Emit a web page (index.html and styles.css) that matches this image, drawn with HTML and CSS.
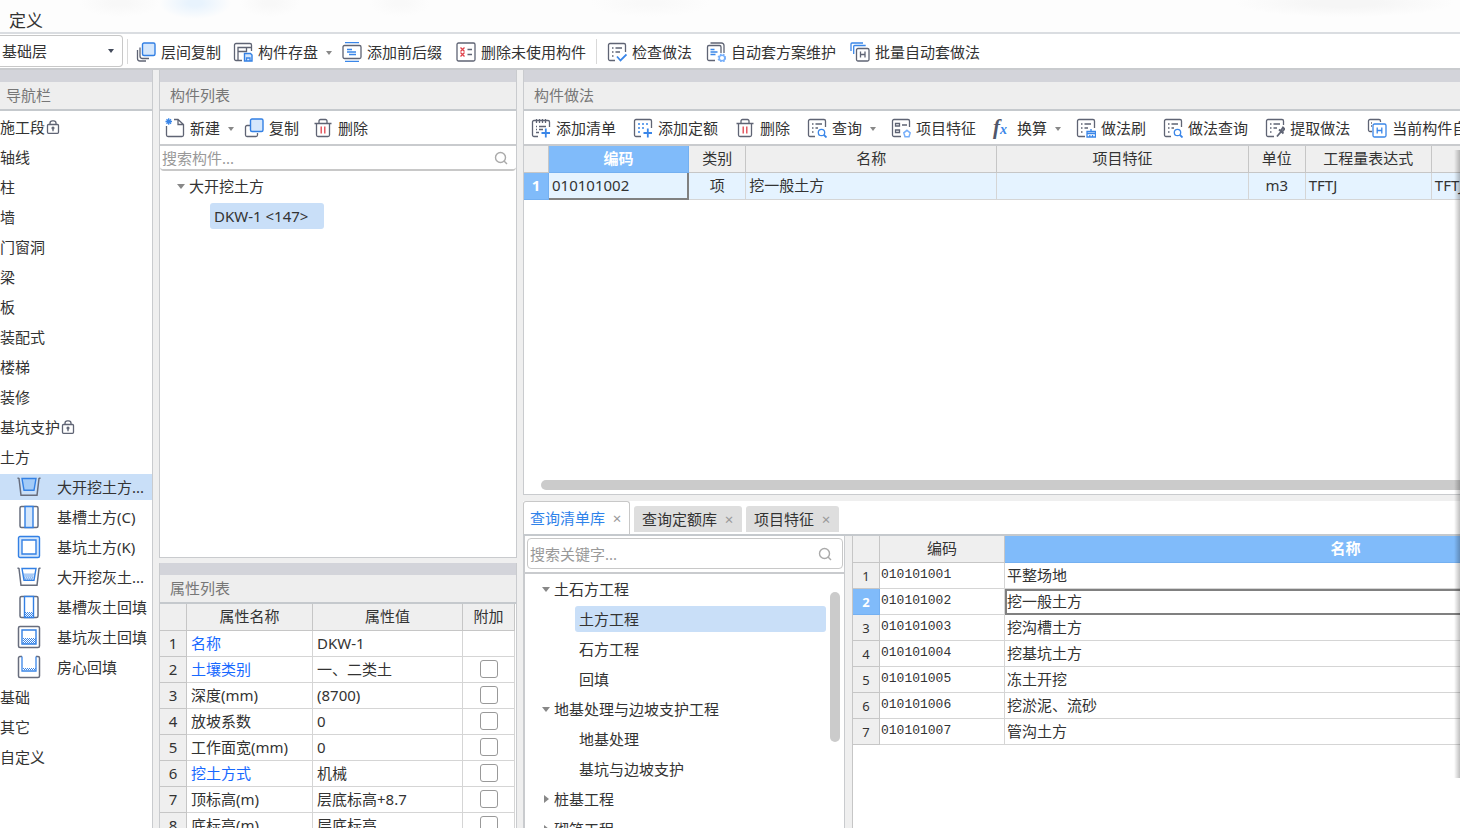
FILE: index.html
```html
<!DOCTYPE html>
<html lang="zh-CN">
<head>
<meta charset="utf-8">
<meta name="viewport" content="width=device-width, initial-scale=1">
<title>定义</title>
<link rel="stylesheet" href="styles.css">
</head>
<body>
<svg class="sprite" aria-hidden="true">
  <symbol id="i-layers" viewBox="0 0 20 20"><path class="g" d="M1.500 8v8.500A2.500 2.500 0 0 0 4 19h6"/><path class="g" d="M4 5.500V14a2.500 2.500 0 0 0 2.500 2.500H13"/><rect class="bf" x="6.500" y="1" width="12.500" height="12.500" rx="1.500"/></symbol>
  <symbol id="i-store" viewBox="0 0 20 20"><path class="g" d="M9 18.500H3A1.500 1.500 0 0 1 1.500 17V3A1.500 1.500 0 0 1 3 1.500h14A1.500 1.500 0 0 1 18.500 3v6M5 18V5.500h13M5 9.500h8.500v-4"/><path class="bf" d="M11.500 11.500h6l1.500 1.500v6h-7.500z"/><path class="b" d="M13.500 19v-3h3.500v3"/></symbol>
  <symbol id="i-affix" viewBox="0 0 20 20"><path class="b" d="M3 .7h14M3 19.300h14M5 7.500h5M5 10h9M7 12.500h7"/><rect class="g" x="1" y="3.500" width="18" height="13" rx="1.500"/></symbol>
  <symbol id="i-unused" viewBox="0 0 20 20"><rect class="g" x="1" y="1" width="18" height="18" rx="1.500"/><path class="g" d="M11.500 7.500h4.500M11.500 12.500h4.500"/><path class="r" d="M4.500 5.500l4 4m0-4l-4 4M4.500 10.500l4 4m0-4l-4 4"/></symbol>
  <symbol id="i-check" viewBox="0 0 20 20"><path class="g" d="M8 18.500H3A1.500 1.500 0 0 1 1.500 17V3A1.500 1.500 0 0 1 3 1.500h14A1.500 1.500 0 0 1 18.500 3v7M5 6h1.500M8.500 6H15M5 10h1.500M8.500 10H13M5 14h1.500"/><path class="b w" d="M10 14.500l3.500 4 6-6"/></symbol>
  <symbol id="i-scheme" viewBox="0 0 20 20"><path class="g" d="M9 18.500H3A1.500 1.500 0 0 1 1.500 17V5A1.500 1.500 0 0 1 3 3.500h10.500A1.500 1.500 0 0 1 15 5v6M4.500 1h11A2.500 2.500 0 0 1 18 3.500V11"/><path class="b" d="M4.500 7.500h4M4.500 10h7M4.500 12.500h5"/><circle class="soft" cx="16" cy="16" r="2.800"/><circle class="soft dash" cx="16" cy="16" r="3.700"/></symbol>
  <symbol id="i-batch" viewBox="0 0 20 20"><path class="b" d="M1 9V2A1 1 0 0 1 2 1h11M3.700 12V4.500a1 1 0 0 1 1-1h11"/><rect class="g" x="6.500" y="6.500" width="12.500" height="12.500" rx="1.500"/><path class="g" d="M10.500 9.500v6m4.500-6v6m-4.500-3H15"/></symbol>
  <symbol id="i-new" viewBox="0 0 20 20"><path class="g" d="M1.500 8v9A1.500 1.500 0 0 0 3 18.500h14a1.500 1.500 0 0 0 1.500-1.500V6.500L13 1.500H9M13 1.500v5h5.500"/><path class="b" d="M.5 3.500h6.500M3.700.3v6.400M1.500 1.200l4.500 4.500M6 1.200L1.500 5.700"/></symbol>
  <symbol id="i-copy" viewBox="0 0 20 20"><path class="g" d="M6 7.500H3A1.500 1.500 0 0 0 1.500 9v8A1.500 1.500 0 0 0 3 18.500h9a1.500 1.500 0 0 0 1.500-1.500v-2"/><rect class="bf" x="6.500" y="1" width="12.500" height="12.500" rx="1.500"/></symbol>
  <symbol id="i-del" viewBox="0 0 20 20"><path class="g" d="M1.500 5.500h17M6 5V3a1.500 1.500 0 0 1 1.500-1.500h5A1.500 1.500 0 0 1 14 3v2M3.500 5.500V17A1.500 1.500 0 0 0 5 18.500h10a1.500 1.500 0 0 0 1.500-1.500V5.500"/><path class="r" d="M8.200 8.500v7M11.800 8.500v7"/></symbol>
  <symbol id="i-addlist" viewBox="0 0 20 20"><path class="g" d="M7 18.500H3A1.500 1.500 0 0 1 1.500 17V4A1.500 1.500 0 0 1 3 2.500h14A1.500 1.500 0 0 1 18.500 4v5M5.500 1v4M8.500 1v4M11.500 1v4M14.500 1v4M5 8.500h1M8 8.500h7M5 11.500h1M8 11.500h4M5 14.500h3"/><path class="b w" d="M10.500 15H19M14.800 10.500v9"/></symbol>
  <symbol id="i-addquota" viewBox="0 0 20 20"><path class="g" d="M8 18.500H3A1.500 1.500 0 0 1 1.500 17V3A1.500 1.500 0 0 1 3 1.500h14A1.500 1.500 0 0 1 18.500 3v7"/><path class="b" d="M5 6h2M9 6h2M13 6h2M5 10h2M9 10h2M5 14h2"/><path class="b w" d="M10.500 15H19M14.800 10.500v9"/></symbol>
  <symbol id="i-query" viewBox="0 0 20 20"><path class="g" d="M8 18.500H3A1.500 1.500 0 0 1 1.500 17V3A1.500 1.500 0 0 1 3 1.500h14A1.500 1.500 0 0 1 18.500 3v6M5 6h1.500M8.500 6H15M5 10h1.500M8.500 10H11M5 14h1.500"/><circle class="b" cx="14.500" cy="14.500" r="3.200"/><path class="b w" d="M17 17l2.500 2.500"/></symbol>
  <symbol id="i-feature" viewBox="0 0 20 20"><path class="g" d="M10 18.500H3A1.500 1.500 0 0 1 1.500 17V3A1.500 1.500 0 0 1 3 1.500h14A1.500 1.500 0 0 1 18.500 3v6M4.500 5.500h4V8h-4zM4.500 12h4v2.500h-4zM11 7h5"/><path class="soft" d="M16 12.300l3.200 2.500-1.200 3.900h-4l-1.200-3.900z"/></symbol>
  <symbol id="i-brush" viewBox="0 0 20 20"><path class="g" d="M9 18.500H3A1.500 1.500 0 0 1 1.500 17V3A1.500 1.500 0 0 1 3 1.500h14A1.500 1.500 0 0 1 18.500 3v7M5 6h1.500M8.500 6H15M5 10h1.500M8.500 10H12M5 14h1.500"/><path class="b" d="M11 19v-5.500h8.500V19zM11 15.500h8.500M15 11v2.500M13.800 17v2M16.500 17v2"/></symbol>
  <symbol id="i-extract" viewBox="0 0 20 20"><path class="g" d="M9 18.500H3A1.500 1.500 0 0 1 1.500 17V3A1.500 1.500 0 0 1 3 1.500h14A1.500 1.500 0 0 1 18.500 3v4M5 6h1.500M8.500 6H15M5 10h1.500M8.500 10H12M5 14h1.500"/><path class="g w" d="M12 18.500l5-6M14 11.500l4.500 4M16 12.500l2-3 1.500 1.500-2 2.500"/></symbol>
  <symbol id="i-current" viewBox="0 0 20 20"><path class="g" d="M5 13.500H3A1.500 1.500 0 0 1 1.500 12V3A1.500 1.500 0 0 1 3 1.500h9A1.500 1.500 0 0 1 13.500 3v1M4 5h1M4 8h1"/><rect class="b" x="6" y="6" width="13" height="13" rx="1.500"/><path class="b" d="M10.200 9.500v6m4.600-6v6m-4.600-3h4.600"/></symbol>
  <symbol id="i-search" viewBox="0 0 14 14"><circle cx="6.500" cy="6.500" r="5"/><path d="M10 10l3 3"/></symbol>
  <symbol id="i-lock" viewBox="0 0 14 14"><rect class="g" x="1.500" y="4.500" width="11" height="8.800" rx="1"/><path class="g" d="M4 4.500V3A2.300 2.300 0 0 1 6.300.8h1.400A2.300 2.300 0 0 1 10 3v1.500M7 9v2.200"/><circle class="g" cx="7" cy="8" r=".9"/></symbol>
  <symbol id="n-pit" viewBox="0 0 24 24"><path class="n" d="M.5 3l1.500.5L4 20.300h16L22 3.500l1.500-.5"/><path class="bs" d="M5 3.500h14l-2 11.700H7z"/></symbol>
  <symbol id="n-trench" viewBox="0 0 24 24"><rect class="n" x="3" y="1.500" width="18" height="21" rx="1.500"/><path class="bf" d="M8 1.500h8v21H8z"/></symbol>
  <symbol id="n-square" viewBox="0 0 24 24"><rect class="bf" x="1.500" y="1.500" width="21" height="21" rx="1.500"/><path class="bw" d="M5 5h14v14H5z"/></symbol>
  <symbol id="n-pitfill" viewBox="0 0 24 24"><path class="n" d="M.5 3l1.500.5L4 20.300h16L22 3.500l1.500-.5"/><path class="bw" d="M5 3.500h14l-2 11.700H7z"/><path class="b dot" d="M6.500 9h11M7.500 10h9M6.500 11h10M7.500 12h9M7 13h10M8 14h8"/></symbol>
  <symbol id="n-trenchfill" viewBox="0 0 24 24"><rect class="n" x="3" y="1.500" width="18" height="21" rx="1.500"/><path class="bw" d="M7.500 1.500h9v21h-9z"/><path class="b dot" d="M8 17.500h8M9 18.500h7M8 19.500h8M9 20.500h7M8 21.500h8"/></symbol>
  <symbol id="n-squarefill" viewBox="0 0 24 24"><rect class="n" x="1.500" y="1.500" width="21" height="21" rx="1.500"/><path class="bw" d="M5 5h14v14H5z"/><path class="b dot" d="M6 13.500h13M7 14.500h12M6 15.500h13M7 16.500h12M6 17.500h13M7 18.500h12"/></symbol>
  <symbol id="n-room" viewBox="0 0 24 24"><path class="n" d="M5 1.500H3A1.500 1.500 0 0 0 1.500 3v18A1.500 1.500 0 0 0 3 22.500h18a1.500 1.500 0 0 0 1.500-1.500V3A1.500 1.500 0 0 0 21 1.500h-2"/><path class="b" d="M5 1.500V16h14V1.500"/><path class="b dot" d="M6 13.500h13M7 14.500h12"/></symbol>
</svg>

<div class="app">
  <header class="titlebar"><h1>定义</h1></header>

  <div class="toolbar main-bar">
    <label class="floor"><select aria-label="楼层"><option>基础层</option></select><i class="caret dark"></i></label>
    <i class="sep"></i>
    <button class="tool first"><svg><use href="#i-layers"/></svg>层间复制</button>
    <button class="tool"><svg><use href="#i-store"/></svg>构件存盘<i class="caret"></i></button>
    <button class="tool"><svg><use href="#i-affix"/></svg>添加前后缀</button>
    <button class="tool"><svg><use href="#i-unused"/></svg>删除未使用构件</button>
    <i class="sep mid"></i>
    <button class="tool"><svg><use href="#i-check"/></svg>检查做法</button>
    <button class="tool"><svg><use href="#i-scheme"/></svg>自动套方案维护</button>
    <button class="tool"><svg><use href="#i-batch"/></svg>批量自动套做法</button>
  </div>

  <div class="workspace">
    <nav class="panel nav-panel">
      <h2 class="panel-head">导航栏</h2>
      <ul class="nav">
        <li><button>施工段<svg class="lock"><use href="#i-lock"/></svg></button></li>
        <li><button>轴线</button></li>
        <li><button>柱</button></li>
        <li><button>墙</button></li>
        <li><button>门窗洞</button></li>
        <li><button>梁</button></li>
        <li><button>板</button></li>
        <li><button>装配式</button></li>
        <li><button>楼梯</button></li>
        <li><button>装修</button></li>
        <li><button>基坑支护<svg class="lock"><use href="#i-lock"/></svg></button></li>
        <li><button>土方</button>
          <ul class="sub">
            <li><button class="on"><svg><use href="#n-pit"/></svg>大开挖土方...</button></li>
            <li><button><svg><use href="#n-trench"/></svg>基槽土方(C)</button></li>
            <li><button><svg><use href="#n-square"/></svg>基坑土方(K)</button></li>
            <li><button><svg><use href="#n-pitfill"/></svg>大开挖灰土...</button></li>
            <li><button><svg><use href="#n-trenchfill"/></svg>基槽灰土回填</button></li>
            <li><button><svg><use href="#n-squarefill"/></svg>基坑灰土回填</button></li>
            <li><button><svg><use href="#n-room"/></svg>房心回填</button></li>
          </ul>
        </li>
        <li><button>基础</button></li>
        <li><button>其它</button></li>
        <li><button>自定义</button></li>
      </ul>
    </nav>

    <div class="column members">
      <section class="panel boxed">
        <h2 class="panel-head">构件列表</h2>
        <div class="toolbar">
          <button class="tool"><svg><use href="#i-new"/></svg>新建<i class="caret"></i></button>
          <button class="tool"><svg><use href="#i-copy"/></svg>复制</button>
          <button class="tool"><svg><use href="#i-del"/></svg>删除</button>
        </div>
        <label class="search flat"><input type="text" placeholder="搜索构件..." aria-label="搜索构件"><svg><use href="#i-search"/></svg></label>
        <ul class="tree member-tree">
          <li><button><i class="arrow open"></i>大开挖土方</button>
            <ul><li><button class="on">DKW-1 &lt;147&gt;</button></li></ul>
          </li>
        </ul>
      </section>

      <section class="panel boxed props">
        <h2 class="panel-head">属性列表</h2>
        <table class="grid prop-grid">
          <colgroup><col class="c-no"><col class="c-name"><col class="c-value"><col class="c-extra"></colgroup>
          <thead><tr><th></th><th>属性名称</th><th>属性值</th><th>附加</th></tr></thead>
          <tbody>
            <tr><th>1</th><td class="key">名称</td><td>DKW-1</td><td></td></tr>
            <tr><th>2</th><td class="key">土壤类别</td><td>一、二类土</td><td class="mid"><input type="checkbox" aria-label="土壤类别附加"></td></tr>
            <tr><th>3</th><td>深度(mm)</td><td>(8700)</td><td class="mid"><input type="checkbox" aria-label="深度附加"></td></tr>
            <tr><th>4</th><td>放坡系数</td><td>0</td><td class="mid"><input type="checkbox" aria-label="放坡系数附加"></td></tr>
            <tr><th>5</th><td>工作面宽(mm)</td><td>0</td><td class="mid"><input type="checkbox" aria-label="工作面宽附加"></td></tr>
            <tr><th>6</th><td class="key">挖土方式</td><td>机械</td><td class="mid"><input type="checkbox" aria-label="挖土方式附加"></td></tr>
            <tr><th>7</th><td>顶标高(m)</td><td>层底标高+8.7</td><td class="mid"><input type="checkbox" aria-label="顶标高附加"></td></tr>
            <tr><th>8</th><td>底标高(m)</td><td>层底标高</td><td class="mid"><input type="checkbox" aria-label="底标高附加"></td></tr>
          </tbody>
        </table>
      </section>
    </div>

    <div class="column methods">
      <section class="panel boxed">
        <h2 class="panel-head">构件做法</h2>
        <div class="toolbar wide">
          <button class="tool"><svg><use href="#i-addlist"/></svg>添加清单</button>
          <button class="tool"><svg><use href="#i-addquota"/></svg>添加定额</button>
          <button class="tool"><svg><use href="#i-del"/></svg>删除</button>
          <button class="tool"><svg><use href="#i-query"/></svg>查询<i class="caret"></i></button>
          <button class="tool"><svg><use href="#i-feature"/></svg>项目特征</button>
          <button class="tool"><span class="fx"><i>f</i><b>x</b></span>换算<i class="caret"></i></button>
          <button class="tool"><svg><use href="#i-brush"/></svg>做法刷</button>
          <button class="tool"><svg><use href="#i-query"/></svg>做法查询</button>
          <button class="tool"><svg><use href="#i-extract"/></svg>提取做法</button>
          <button class="tool"><svg><use href="#i-current"/></svg>当前构件自动套做法</button>
        </div>
        <table class="grid method-grid">
          <colgroup><col class="m-no"><col class="m-code"><col class="m-kind"><col class="m-name"><col class="m-name"><col class="m-kind"><col class="m-expr"><col class="m-expr"></colgroup>
          <thead><tr><th></th><th class="active">编码</th><th>类别</th><th>名称</th><th>项目特征</th><th>单位</th><th>工程量表达式</th><th></th></tr></thead>
          <tbody><tr><th class="active">1</th><td class="focus">010101002</td><td class="mid">项</td><td>挖一般土方</td><td></td><td class="mid">m3</td><td>TFTJ</td><td>TFTJ</td></tr></tbody>
        </table>
        <div class="hscroll"><i></i></div>
      </section>

      <section class="lookup">
        <div class="tabs">
          <div class="tab current"><button>查询清单库</button><button class="close" aria-label="关闭查询清单库">×</button></div>
          <div class="tab"><button>查询定额库</button><button class="close" aria-label="关闭查询定额库">×</button></div>
          <div class="tab"><button>项目特征</button><button class="close" aria-label="关闭项目特征">×</button></div>
        </div>
        <div class="split">
          <div class="catalog">
            <div class="search-wrap"><label class="search"><input type="text" placeholder="搜索关键字..." aria-label="搜索关键字"><svg><use href="#i-search"/></svg></label></div>
            <div class="catalog-body">
              <ul class="tree">
                <li><button><i class="arrow open"></i>土石方工程</button>
                  <ul>
                    <li><button class="on">土方工程</button></li>
                    <li><button>石方工程</button></li>
                    <li><button>回填</button></li>
                  </ul>
                </li>
                <li><button><i class="arrow open"></i>地基处理与边坡支护工程</button>
                  <ul>
                    <li><button>地基处理</button></li>
                    <li><button>基坑与边坡支护</button></li>
                  </ul>
                </li>
                <li><button><i class="arrow"></i>桩基工程</button></li>
                <li><button><i class="arrow"></i>砌筑工程</button></li>
              </ul>
              <div class="vscroll"><i></i></div>
            </div>
          </div>
          <div class="results">
            <table class="grid result-grid">
              <colgroup><col class="c-no"><col class="r-code"><col class="r-name"></colgroup>
              <thead><tr><th></th><th>编码</th><th class="active">名称</th></tr></thead>
              <tbody>
                <tr><th>1</th><td class="code">010101001</td><td>平整场地</td></tr>
                <tr><th class="active">2</th><td class="code">010101002</td><td class="outlined">挖一般土方</td></tr>
                <tr><th>3</th><td class="code">010101003</td><td>挖沟槽土方</td></tr>
                <tr><th>4</th><td class="code">010101004</td><td>挖基坑土方</td></tr>
                <tr><th>5</th><td class="code">010101005</td><td>冻土开挖</td></tr>
                <tr><th>6</th><td class="code">010101006</td><td>挖淤泥、流砂</td></tr>
                <tr><th>7</th><td class="code">010101007</td><td>管沟土方</td></tr>
              </tbody>
            </table>
          </div>
        </div>
      </section>
    </div>
    <i class="edge-shadow"></i>
  </div>
</div>
</body>
</html>
```
FILE: styles.css
```css
* { box-sizing: border-box; }

body {
  margin: 0;
  color: #333;
  background: #efefef;
  font: 15px/20px "Noto Sans", "Noto Sans CJK SC", sans-serif;
}

button, input, select {
  margin: 0;
  padding: 0;
  border: 0;
  color: inherit;
  background: none;
  font: inherit;
}

ul { margin: 0; padding: 0; list-style: none; }
h1, h2 { margin: 0; font-weight: 400; }
i { font-style: normal; }

/* icon strokes */
.sprite { position: absolute; width: 0; height: 0; }
.g, .b, .r, .n, .soft { fill: none; stroke: #5f6474; stroke-width: 1.3; }
.n { stroke: #676d7d; stroke-width: 1.5; }
.b { stroke: #3a86e8; }
.r { stroke: #e0414a; }
.w { stroke-width: 1.8; }
.soft { stroke: #77affa; stroke-width: 1.5; }
.bf, .bs, .bw { fill: #d5e7fc; stroke: #3380e4; stroke-width: 1.4; }
.bs { fill: #a3cbf7; }
.bw { fill: #fff; }
.dash { stroke-dasharray: 1.5 1.5; }
.dot { stroke-dasharray: 1 1; stroke-width: 1; }

.app {
  display: flex;
  flex-direction: column;
  height: 100vh;
  overflow: hidden;
}

.titlebar {
  flex: none;
  height: 34px;
  padding: 11px 9px 0;
  border-bottom: 2px solid #dadde1;
  background:
    radial-gradient(ellipse 36px 16px at 195px 3px, #e8f3fd 20%, transparent),
    radial-gradient(ellipse 40px 14px at 120px 3px, #f8f8f8 20%, transparent),
    radial-gradient(ellipse 30px 14px at 270px 3px, #f8f8f8 20%, transparent),
    radial-gradient(ellipse 30px 14px at 400px 3px, #f9f9f9 20%, transparent),
    radial-gradient(ellipse 60px 14px at 650px 3px, #f9f9f9 20%, transparent),
    radial-gradient(ellipse 110px 14px at 1345px 3px, #f6f6f6 30%, transparent),
    #fdfdfd;
}
.titlebar h1 { font-size: 17px; line-height: 20px; }

.toolbar {
  display: flex;
  flex: none;
  align-items: center;
  gap: 14px;
  height: 35px;
  padding: 1px 0 0 5px;
  overflow: hidden;
  border-bottom: 2px solid #c9cbce;
  background: #fff;
}
.toolbar.wide { gap: 17px; padding-left: 7px; }
.toolbar.wide .caret { margin-right: -2px; }
.main-bar { height: 36px; padding: 0; }

.tool {
  display: flex;
  flex: none;
  align-items: center;
  white-space: nowrap;
}
.tool svg { width: 20px; height: 20px; margin-right: 5px; }
.main-bar .tool { padding-top: 2px; }
.main-bar .first { margin: 0 -2px 0 -6px; }

.caret {
  width: 6px;
  margin: 2px -4px 0 8px;
  border: 3px solid transparent;
  border-top: 4px solid #888;
  border-bottom: 0;
}
.caret.dark { margin: 0; border-top-color: #444b5c; }

.sep { width: 1px; height: 25px; margin-left: -10px; background: #d9d9d9; }
.sep.mid { margin: 0 -4px; }

.floor {
  display: flex;
  align-items: center;
  width: 123px;
  height: 32px;
  padding-right: 8px;
  border: 1px solid #c8c8c8;
  border-left: 0;
  border-radius: 0 4px 4px 0;
}
.floor select { flex: 1; padding-left: 2px; appearance: none; outline: 0; }

.fx {
  display: flex;
  align-items: baseline;
  width: 20px;
  margin-right: 4px;
  font: italic 700 15px/20px "Liberation Serif", serif;
}
.fx i { color: #50566a; font-size: 21px; font-style: italic; }
.fx b { color: #3a86e8; font-size: 14px; }

.workspace {
  position: relative;
  display: grid;
  flex: 1;
  grid-template-columns: 153px 358px minmax(0, 1fr);
  gap: 6px;
  min-height: 0;
}

.column { display: grid; min-height: 0; min-width: 0; }
.members { grid-template-rows: minmax(0, 488fr) minmax(0, 265fr); gap: 5px; }
.methods { grid-template-rows: minmax(0, 425fr) minmax(0, 327fr); gap: 6px; }

.panel {
  display: flex;
  flex-direction: column;
  min-width: 0;
  min-height: 0;
  overflow: hidden;
  border-right: 1px solid #c9cbce;
  background: #fff;
}
.boxed { border-bottom: 1px solid #c9cbce; border-left: 1px solid #c9cbce; }
.methods .boxed { border-right: 0; }
.props { border-bottom: 0; }

.panel-head {
  flex: none;
  height: 41px;
  padding: 3px 10px 0;
  border-top: 12px solid #d3d4da;
  border-bottom: 2px solid #c5c9cd;
  color: #777;
  background: #eee;
  font-size: 15px;
  line-height: 20px;
}
.nav-panel .panel-head { padding-left: 6px; }

.nav { padding-top: 1px; }
.nav button {
  display: flex;
  align-items: center;
  width: 100%;
  height: 26px;
  margin: 2px 0;
  white-space: nowrap;
}
.nav > li { display: flow-root; }
.nav .sub li { display: flow-root; }
.nav .lock { width: 14px; height: 14px; margin-left: 1px; }
.sub button { padding-left: 17px; }
.sub svg { flex: none; width: 24px; height: 24px; margin-right: 16px; }
.nav .on { background: #c9dff8; }

.search {
  display: flex;
  flex: 1;
  align-items: center;
  padding-right: 10px;
  border: 1px solid #c8c8c8;
  border-radius: 4px;
  background: #fff;
}
.search input { flex: 1; min-width: 0; padding-left: 2px; outline: 0; }
.search input::placeholder { color: #999; opacity: 1; }
.search svg { width: 14px; height: 14px; fill: none; stroke: #aaa; stroke-width: 1.4; }
.flat {
  flex: none;
  height: 25px;
  padding-right: 8px;
  border-width: 0 0 2px;
  border-radius: 0 0 4px 4px;
}
.search-wrap {
  display: flex;
  flex: none;
  height: 38px;
  padding: 2px 1px 3px 2px;
  border-bottom: 2px solid #c9cbce;
}

.tree { flex: 1; min-width: 0; padding: 0 4px 0 15px; }
.tree li { display: flow-root; }
.tree button {
  display: flex;
  align-items: center;
  height: 26px;
  margin: 2px 0;
  padding-left: 1px;
  white-space: nowrap;
}
.tree ul button { padding: 0 5px 0 4px; border-radius: 3px; }
.tree ul { padding-left: 35px; }
.tree .on { background: #c9dff8; }
.member-tree ul .on { min-width: 114px; }
.catalog .tree ul button { width: 100%; }

.arrow {
  width: 5px;
  height: 8px;
  margin: 0 5px 0 3px;
  border: 4px solid transparent;
  border-right: 0;
  border-left: 5px solid #888;
}
.arrow.open {
  width: 8px;
  height: 5px;
  margin: 0 4px 0 1px;
  border: 4px solid transparent;
  border-top: 5px solid #888;
  border-bottom: 0;
}

.grid { border-spacing: 0; table-layout: fixed; }
.grid th, .grid td {
  height: 26px;
  padding: 0 4px 2px;
  overflow: hidden;
  border-right: 1px solid #d5d5d5;
  border-bottom: 1px solid #d5d5d5;
  font-weight: 400;
  line-height: 20px;
  text-align: left;
  white-space: nowrap;
}
.grid th { padding: 0 0 2px; border-color: #c6c6c6; background: #efefef; text-align: center; }
.grid thead th { height: 27px; }
.grid .mid { padding: 0 0 2px; text-align: center; }
.grid .active { border-color: #74b0f1; color: #fff; background: #80bbfa; font-weight: 700; }

.prop-grid { width: 355px; }
.c-no { width: 27px; }
.c-name { width: 126px; }
.c-value { width: 150px; }
.c-extra { width: 52px; }
.grid .key { color: #1769ff; }
.grid input {
  display: block;
  width: 18px;
  height: 18px;
  margin: 0 auto;
  border: 1px solid #999;
  border-radius: 3px;
  background: #fff;
  appearance: none;
}

.method-grid { width: 1034px; }
.m-no { width: 25px; }
.m-code { width: 140px; }
.m-kind { width: 57px; }
.m-name { width: 251px; }
.m-expr { width: 126px; }
.method-grid td { height: 27px; padding: 0 3px 2px; background: #e5f3ff; }
.method-grid .focus { border-right: 2px solid #808080; border-bottom: 2px solid #808080; }

.hscroll { flex: none; margin-top: auto; padding: 0 0 4px 17px; }
.hscroll i { display: block; height: 10px; border-radius: 5px 0 0 5px; background: #cbcbcb; }

.lookup { display: flex; flex-direction: column; min-width: 0; min-height: 0; background: #fff; }
.tabs {
  display: flex;
  flex: none;
  align-items: flex-end;
  gap: 4px;
  height: 35px;
  border-bottom: 2px solid #c5c9cd;
}
.tab {
  display: flex;
  align-items: center;
  height: 26px;
  margin-bottom: 2px;
  padding: 0 7px 0 8px;
  border-radius: 3px 3px 0 0;
  background: #dedede;
}
.tab.current {
  height: 33px;
  margin-bottom: 0;
  padding: 0 6px;
  border: 1px solid #c8c8c8;
  border-bottom: 0;
  color: #2f83ea;
  background: #fff;
}
.close { width: 12px; margin-left: 6px; color: #999; font-size: 15px; }

.split { display: flex; flex: 1; min-height: 0; background: #efefef; }
.catalog {
  display: flex;
  flex: none;
  flex-direction: column;
  width: 322px;
  overflow: hidden;
  border-right: 1px solid #c9cbce;
  border-left: 2px solid #c9cbce;
  background: #fff;
}
.catalog-body { display: flex; flex: 1; min-height: 0; }
.vscroll { flex: none; width: 14px; padding-top: 18px; }
.vscroll i { display: block; width: 10px; height: 150px; border-radius: 5px; background: #cbcbcb; }

.results {
  flex: 1;
  min-width: 0;
  margin-left: 7px;
  overflow: hidden;
  border-left: 1px solid #c6c6c6;
  background: #fff;
}
.result-grid { width: 834px; }
.r-code { width: 125px; }
.r-name { width: 682px; }
.result-grid td { padding: 0 2px 2px; }
.result-grid .code { padding-left: 1px; font-family: "Liberation Mono", monospace; font-size: 13px; }
.result-grid tbody th { padding: 0; font-size: 13px; }
.result-grid .outlined { padding: 0 1px 2px 0; border: 2px solid #808080; }

/* shade cast by the window edge on the right */
.edge-shadow {
  position: absolute;
  top: 80px;
  right: 0;
  bottom: 50px;
  width: 6px;
  background: linear-gradient(to right, transparent, rgba(0, 0, 0, .25));
  pointer-events: none;
}
```
